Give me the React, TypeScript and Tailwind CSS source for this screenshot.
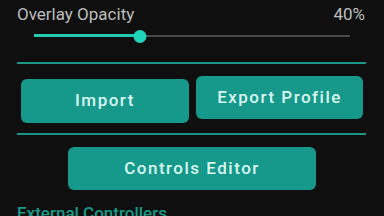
import React from 'react';

function OpacitySlider({ value }: { value: number }) {
  return (
    <div className="relative mx-[34px] mt-[6px] h-[12px] w-[316px]">
      <div className="absolute left-0 right-0 top-[5px] h-[2px] bg-[#4a4a4a]" />
      <div className="absolute left-0 top-[4px] h-[3px] bg-[#22c9b3]" style={{ width: `${value}%` }} />
      <div
        className="absolute top-0 h-[13px] w-[13px] -translate-x-1/2 rounded-full bg-[#22d3bb]"
        style={{ left: `${value}%` }}
      />
    </div>
  );
}

function Divider() {
  return <div className="mx-[17px] h-[2px] w-[349px] bg-[#1a9686]" />;
}

const btn =
  'flex items-center justify-center rounded-[6px] bg-[#16998a] text-[17px] font-medium tracking-[1.5px] text-[#d9f7f1]';

export default function App() {
  return (
    <div
      className="h-[216px] w-[384px] overflow-hidden bg-[#0f0f0f]"
      style={{ fontFamily: 'Roboto, "Noto Sans", sans-serif' }}
    >
      <div className="flex items-center justify-between pl-[17px] pr-[19px] pt-[4px] text-[17px] leading-[20px] text-[#bdbdbd]">
        <span>Overlay Opacity</span>
        <span>40%</span>
      </div>
      <OpacitySlider value={33.5} />
      <div className="mt-[20px]">
        <Divider />
      </div>
      <div className="mt-[12px] flex items-start gap-[7px] pl-[21px]">
        <button className={`${btn} mt-[3px] h-[44px] w-[168px]`}>Import</button>
        <button className={`${btn} h-[43px] w-[167px]`}>Export Profile</button>
      </div>
      <div className="mt-[10px]">
        <Divider />
      </div>
      <div className="mt-[12px] flex justify-center">
        <button className={`${btn} h-[43px] w-[248px]`}>Controls Editor</button>
      </div>
      <div className="mt-[13px] pl-[17px] text-[17px] font-medium leading-[20px] text-[#179a86]">
        External Controllers
      </div>
    </div>
  );
}
